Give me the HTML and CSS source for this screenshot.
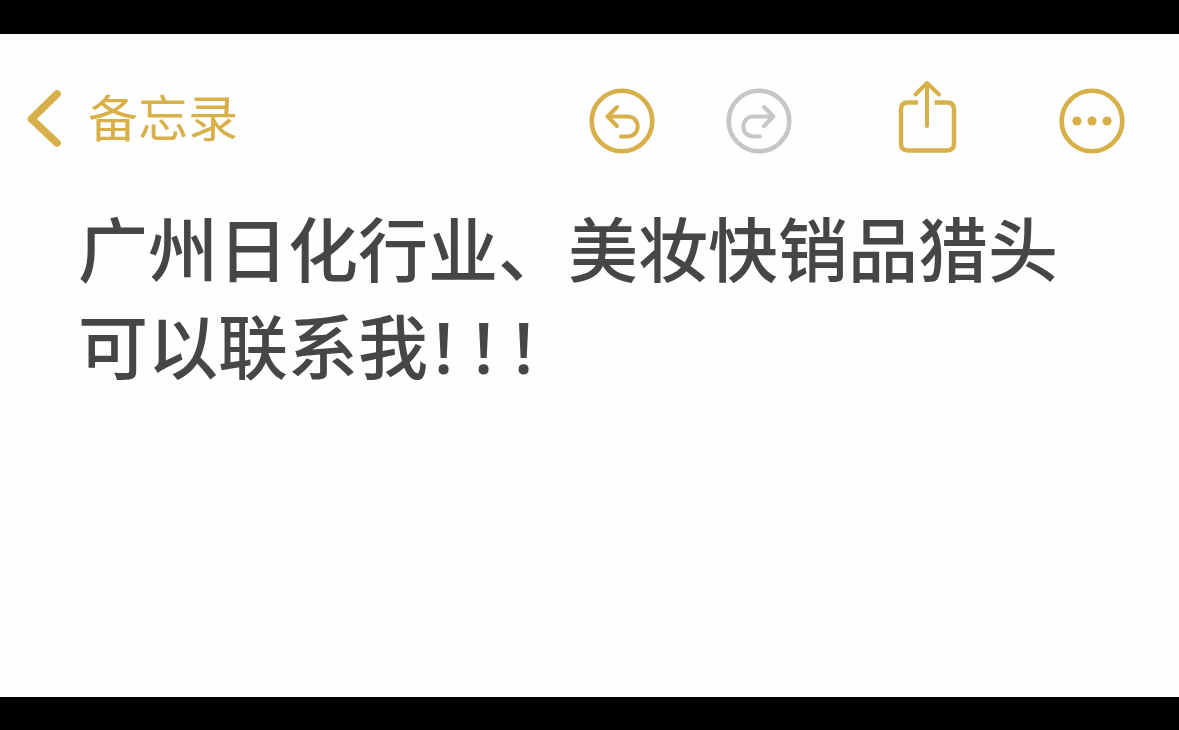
FILE: index.html
```html
<!DOCTYPE html>
<html lang="zh-CN">
<head>
<meta charset="utf-8">
<meta name="viewport" content="width=device-width, initial-scale=1">
<title>备忘录</title>
<link rel="stylesheet" href="styles.css">
</head>
<body>
<div class="screen">
  <header class="toolbar">
    <button class="back" type="button">
      <svg width="36" height="70" viewBox="0 0 36 70" aria-hidden="true"><path d="M31 14 5.500 39 31 63" stroke-width="7.600"/></svg>
      <span>备忘录</span>
    </button>
    <div class="actions">
      <button class="icon" type="button" aria-label="撤销">
        <svg width="66" height="66" viewBox="0 0 66 66" aria-hidden="true"><circle cx="33" cy="33" r="30.3" stroke-width="4.6"/><path d="M28 22 18.500 31.500 28 41M19.500 31.500H38.500C52 31.500 52 51.500 38.500 51.500H32" transform="translate(0 -3)" stroke-width="4"/></svg>
      </button>
      <button class="icon redo" type="button" aria-label="重做">
        <svg width="66" height="66" viewBox="0 0 66 66" aria-hidden="true"><circle cx="33" cy="33" r="30.3" stroke-width="4.6"/><path d="M38 22 47.500 31.500 38 41M46.500 31.500H27.500C14 31.500 14 51.500 27.500 51.500H34" transform="translate(0 -3)" stroke-width="4"/></svg>
      </button>
      <button class="icon share" type="button" aria-label="共享">
        <svg width="60" height="74" viewBox="0 0 60 74" aria-hidden="true"><path d="M21 22.500H11Q4 22.500 4 29.500V63.500Q4 70.500 11 70.500H50Q57 70.500 57 63.500V29.500Q57 22.500 50 22.500H37.500" stroke-width="4.400" stroke-linecap="butt"/><path d="M30 46V4M18.500 14.500 30 3 42 14.500" stroke-width="4"/></svg>
      </button>
      <button class="icon more" type="button" aria-label="更多">
        <svg width="66" height="66" viewBox="0 0 66 66" aria-hidden="true"><circle cx="33" cy="33" r="30.3" stroke-width="4.6"/><g class="dots"><circle cx="18" cy="33" r="4.6"/><circle cx="33" cy="33" r="4.6"/><circle cx="48" cy="33" r="4.6"/></g></svg>
      </button>
    </div>
  </header>
  <main class="note">
    <h1>广州日化行业、美妆快销品猎头<br>可以联系我<span class="mark">!</span><span class="mark">!</span><span class="mark">!</span></h1>
  </main>
</div>
</body>
</html>
```
FILE: styles.css
```css
* {
  box-sizing: border-box;
}

body {
  margin: 0;
  background: #000;
  font-family: "Noto Sans CJK SC", sans-serif;
}

.screen {
  min-height: calc(100vh - 67px);
  margin: 34px 0 33px;
  background: #fefefe;
}

.toolbar {
  display: flex;
  align-items: center;
  justify-content: space-between;
  padding: 46px 54px 0 26px;
  color: #d8b04a;
}

button {
  display: flex;
  align-items: center;
  padding: 0;
  border: 0;
  background: none;
  color: inherit;
  font: inherit;
}

svg {
  display: block;
  fill: none;
  stroke: currentColor;
  stroke-linecap: round;
  stroke-linejoin: round;
}

.back {
  gap: 26px;
  padding-bottom: 4px;
  font-size: 50px;
  line-height: 70px;
}

.actions {
  display: flex;
  align-items: flex-end;
}

.redo {
  margin-left: 71px;
  color: #c6c6c6;
}

.share {
  margin-left: 105px;
}

.more {
  margin-left: 102px;
}

.dots {
  fill: currentColor;
  stroke: none;
}

.note {
  padding: 44px 78px;
  color: #464646;
}

h1 {
  margin: 0;
  font-size: 70px;
  font-weight: 500;
  line-height: 97px;
}

.mark {
  display: inline-block;
  width: 40px;
  padding-left: 6px;
  font-family: "Open Sans", "Noto Sans CJK SC", sans-serif;
  font-weight: 600;
}
```
